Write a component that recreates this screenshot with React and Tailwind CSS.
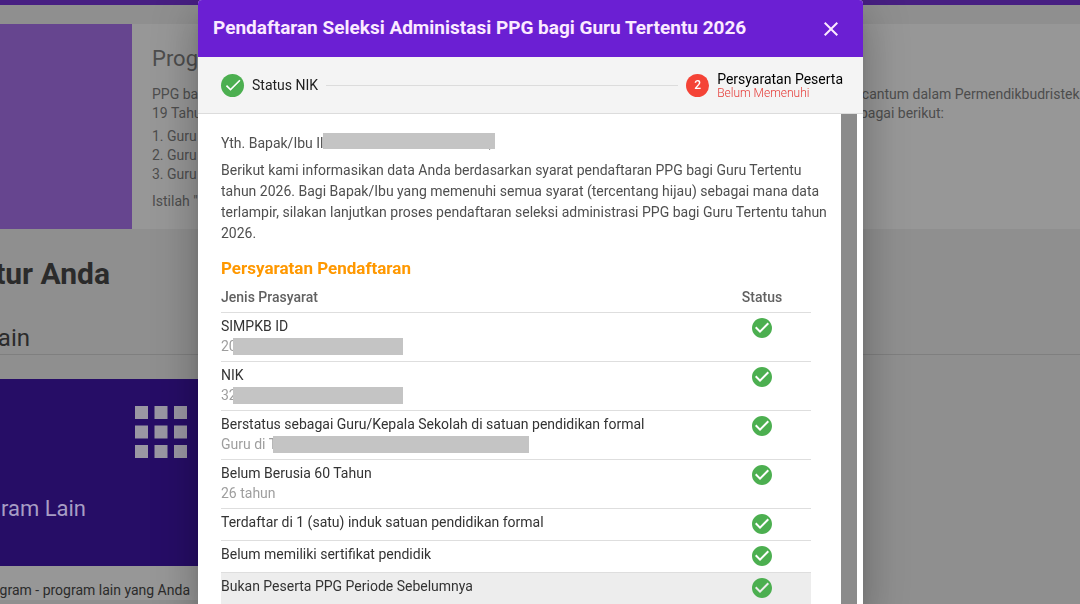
import clsx from 'clsx';
import { MdApps, MdCheck, MdCheckCircle, MdClose } from 'react-icons/md';

const requirements = [
  { title: 'SIMPKB ID', detail: '20', masked: 'w-[170px]' },
  { title: 'NIK', detail: '32', masked: 'w-[170px]' },
  {
    title: 'Berstatus sebagai Guru/Kepala Sekolah di satuan pendidikan formal',
    detail: 'Guru di T',
    masked: 'w-[256px]',
  },
  { title: 'Belum Berusia 60 Tahun', detail: '26 tahun' },
  { title: 'Terdaftar di 1 (satu) induk satuan pendidikan formal' },
  { title: 'Belum memiliki sertifikat pendidik' },
  { title: 'Bukan Peserta PPG Periode Sebelumnya', active: true },
];

function ProgramInfo() {
  return (
    <section className="mt-[19px] flex h-[205px] bg-[#979797] text-[#4d4d4d]">
      <div className="w-[132px] shrink-0 bg-[#66458f]" />
      <div className="min-w-0 flex-1 pl-5 pt-[21px] text-sm leading-[19px] whitespace-nowrap">
        <h2 className="text-[22px] leading-7">Program PPG</h2>
        <div className="mt-3 flex justify-between">
          <p>
            PPG bagi Guru
            <br />
            19 Tahun 2024
          </p>
          <p className="w-[268px] shrink-0">
            yang tercantum dalam Permendikbudristek
            <br />
            yaitu sebagai berikut:
          </p>
        </div>
        <ol className="mt-1 list-inside list-decimal">
          <li>Guru</li>
          <li>Guru</li>
          <li>Guru</li>
        </ol>
        <p className="mt-2">Istilah "</p>
      </div>
    </section>
  );
}

function Features() {
  return (
    <section className="whitespace-nowrap">
      <h2 className="mt-[25px] flex w-[110px] justify-end text-[30px] leading-10 font-bold text-[#2b2b2b]">
        Fitur Anda
      </h2>
      <div className="mt-7 border-b border-[#7f7f7f]">
        <h3 className="flex w-[30px] justify-end text-2xl leading-8 text-[#2b2b2b]">
          Program Lain
        </h3>
      </div>
      <div className="mt-6 w-[300px] bg-[#979797]">
        <div className="h-[187px] bg-[#260d66] pt-[14px] text-[#a79dc4]">
          <div className="flex w-[200px] justify-end">
            <MdApps className="size-[78px] text-[#9a97a3]" />
          </div>
          <h4 className="mt-6 flex w-[86px] justify-end text-[22px] leading-7">
            Program Lain
          </h4>
        </div>
        <p className="mt-[14px] flex w-[190px] justify-end text-sm leading-5 text-[#2b2b2b]">
          Program - program lain yang Anda
        </p>
      </div>
    </section>
  );
}

function Stepper() {
  return (
    <div className="flex h-[57px] shrink-0 items-center border-b border-[#dcdcdc] bg-[#f4f4f4] pl-[23px] pr-5 text-sm leading-4 text-[#212121]">
      <span className="grid size-[23px] place-items-center rounded-full bg-[#4caf50] text-white">
        <MdCheck className="size-5" />
      </span>
      <span className="ml-2">Status NIK</span>
      <span className="mx-2 h-px flex-1 bg-[#dcdcdc]" />
      <span className="grid size-[23px] place-items-center rounded-full bg-[#f44336] text-xs font-medium text-white">
        2
      </span>
      <div className="ml-2">
        <p className="text-black">Persyaratan Peserta</p>
        <p className="text-xs leading-3 font-light text-[#e53935]">Belum Memenuhi</p>
      </div>
    </div>
  );
}

function RequirementTable() {
  return (
    <table className="w-full text-sm leading-5">
      <thead>
        <tr className="border-b border-[#dedede] text-[#616161]">
          <th className="pt-[7px] pb-[5px] text-left font-medium">Jenis Prasyarat</th>
          <th className="w-[98px] pt-[7px] pb-[5px] text-center font-medium">Status</th>
        </tr>
      </thead>
      <tbody>
        {requirements.map(({ title, detail, masked, active }) => (
          <tr
            key={title}
            className={clsx('border-b border-[#dedede] align-top', active && 'bg-[#ededed]')}
          >
            <td className="pt-[3px] pb-[5px]">
              <p className="text-[#333333]">{title}</p>
              {detail && (
                <p className="flex items-center text-[#9e9e9e]">
                  {detail}
                  {masked && <span className={clsx('-ml-1 h-[17px] bg-[#c4c4c4]', masked)} />}
                </p>
              )}
            </td>
            <td className="pt-[3px] pb-1">
              <MdCheckCircle className="mx-auto size-6 text-[#4caf50]" aria-label="Terpenuhi" />
            </td>
          </tr>
        ))}
      </tbody>
    </table>
  );
}

function RegistrationDialog() {
  return (
    <div className="fixed inset-0 flex justify-center pr-[19px]">
      <div
        role="dialog"
        aria-labelledby="dialog-title"
        className="flex w-[665px] flex-col overflow-hidden rounded-t-sm bg-white shadow-[0_11px_15px_-7px_rgba(0,0,0,0.2),0_24px_38px_3px_rgba(0,0,0,0.14),0_9px_46px_8px_rgba(0,0,0,0.12)]"
      >
        <header className="flex h-[57px] shrink-0 items-center justify-between bg-[#6b1fd3] pl-[15px] pr-5 text-[#fbeaff]">
          <h1 id="dialog-title" className="text-[19px] font-bold">
            Pendaftaran Seleksi Administasi PPG bagi Guru Tertentu 2026
          </h1>
          <button type="button" aria-label="Tutup">
            <MdClose className="size-6" />
          </button>
        </header>
        <Stepper />
        <div className="flex min-h-0 flex-1">
          <div className="flex-1 overflow-hidden pl-[23px] pr-[30px] pt-[19px] text-sm leading-[21px] text-[#4f4f4f]">
            <p>
              Yth. Bapak/Ibu Il
              <span className="relative inline-block w-[172px] pr-1 text-right">
                ,
                <span className="absolute inset-x-0 top-0 h-4 bg-[#c4c4c4]" />
              </span>
            </p>
            <p className="-mr-5 mt-1.5">
              Berikut kami informasikan data Anda berdasarkan syarat pendaftaran PPG bagi Guru
              Tertentu tahun 2026. Bagi Bapak/Ibu yang memenuhi semua syarat (tercentang hijau)
              sebagai mana data terlampir, silakan lanjutkan proses pendaftaran seleksi
              administrasi PPG bagi Guru Tertentu tahun 2026.
            </p>
            <h2 className="mt-3 text-[17px] leading-6 font-bold text-[#ff9800]">
              Persyaratan Pendaftaran
            </h2>
            <RequirementTable />
          </div>
          <div className="mr-1.5 w-4 shrink-0 bg-[#8b8b8b]" />
        </div>
      </div>
    </div>
  );
}

export default function App() {
  return (
    <div className="h-screen overflow-hidden bg-[#8f8f8f] font-[Roboto,sans-serif]">
      <div className="h-[5px] bg-[#471f82]" />
      <ProgramInfo />
      <Features />
      <RegistrationDialog />
    </div>
  );
}
